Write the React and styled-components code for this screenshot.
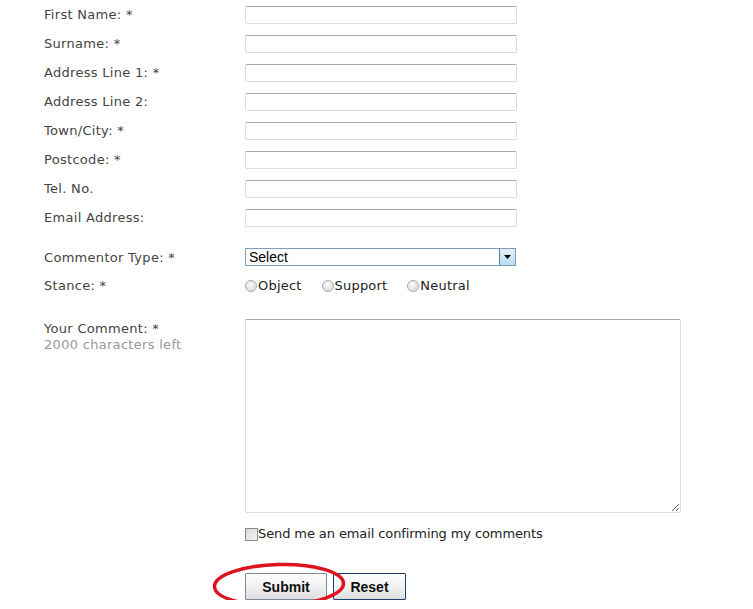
import React from "react";
import styled, { createGlobalStyle } from "styled-components";

const GlobalStyle = createGlobalStyle`
  body {
    margin: 0;
    background: #fff;
    font-family: "DejaVu Sans", Verdana, sans-serif;
  }
`;

const fields = [
  { label: "First Name: *" },
  { label: "Surname: *" },
  { label: "Address Line 1: *" },
  { label: "Address Line 2:" },
  { label: "Town/City: *" },
  { label: "Postcode: *" },
  { label: "Tel. No." },
  { label: "Email Address:" },
];

const stances = ["Object", "Support", "Neutral"];

const App = () => {
  return (
    <>
      <GlobalStyle />
      <Form>
        {fields.map((f) => (
          <Row key={f.label}>
            <Label>{f.label}</Label>
            <TextInput type="text" />
          </Row>
        ))}

        <Row $top={10}>
          <Label $pad={2}>Commentor Type: *</Label>
          <SelectBox>
            <SelectText>Select</SelectText>
            <ArrowButton>
              <svg width="7" height="4" viewBox="0 0 7 4">
                <path d="M0 0h7L3.5 4z" fill="#000" />
              </svg>
            </ArrowButton>
          </SelectBox>
        </Row>

        <Row>
          <Label $pad={1}>Stance: *</Label>
          <Radios>
            {stances.map((s) => (
              <RadioOption key={s}>
                <Radio type="radio" name="stance" />
                {s}
              </RadioOption>
            ))}
          </Radios>
        </Row>

        <CommentRow>
          <Label $pad={2}>
            Your Comment: *
            <Hint>2000 characters left</Hint>
          </Label>
          <Comment />
        </CommentRow>

        <CheckRow>
          <span />
          <CheckLabel>
            <Check type="checkbox" />
            Send me an email confirming my comments
          </CheckLabel>
        </CheckRow>

        <ButtonRow>
          <span />
          <Buttons>
            <Button $w={82}>Submit</Button>
            <Button $w={73} $focus>
              Reset
            </Button>
            <Circle width="138" height="48" viewBox="0 0 138 48">
              <ellipse
                cx="67"
                cy="23"
                rx="64.5"
                ry="20.5"
                fill="none"
                stroke="#dc1420"
                strokeWidth="3.5"
                transform="rotate(-1.5 67 23)"
              />
            </Circle>
          </Buttons>
        </ButtonRow>
      </Form>
    </>
  );
};

const Form = styled.form`
  padding-left: 44px;
  width: 700px;
`;

const Row = styled.div`
  display: grid;
  grid-template-columns: 201px 1fr;
  align-items: center;
  height: 29px;
  margin-top: ${(p) => p.$top || 0}px;
`;

const Label = styled.label`
  font-size: 13px;
  letter-spacing: 0.3px;
  color: #444;
  line-height: 16px;
  padding-top: ${(p) => p.$pad || 0}px;
`;

const Hint = styled.div`
  color: #999;
`;

const TextInput = styled.input`
  box-sizing: border-box;
  width: 272px;
  height: 18px;
  margin: 0;
  padding: 0 3px;
  border: 1px solid #dcdcdc;
  border-top-color: #a9a9a9;
  border-radius: 2px;
  background: #fff;
  outline: none;
`;

const SelectBox = styled.div`
  box-sizing: border-box;
  display: flex;
  width: 271px;
  height: 18px;
  border: 1px solid #7f9db9;
  background: #fff;
`;

const SelectText = styled.span`
  flex: 1;
  font-family: "Liberation Sans", Arial, sans-serif;
  font-size: 14px;
  line-height: 16px;
  color: #000;
  padding-left: 3px;
  border-right: 1px solid #5f7f9f;
`;

const ArrowButton = styled.span`
  width: 15px;
  display: flex;
  align-items: center;
  justify-content: center;
  background: linear-gradient(#e4f1fb, #b8dbf4);
  padding-top: 1px;
`;

const Radios = styled.div`
  display: flex;
  align-items: center;
`;

const RadioOption = styled.label`
  display: flex;
  align-items: center;
  font-size: 13px;
  letter-spacing: 0.2px;
  color: #222;
  margin-right: 20px;
`;

const Radio = styled.input`
  appearance: none;
  width: 12px;
  height: 12px;
  margin: 0 1px 0 0;
  border: 1px solid #a8a8a8;
  border-radius: 50%;
  background: radial-gradient(circle at 40% 35%, #fafafa, #d4d4d4);
  box-sizing: border-box;
`;

const CommentRow = styled.div`
  display: grid;
  grid-template-columns: 201px 1fr;
  align-items: start;
  margin-top: 19px;
`;

const Comment = styled.textarea`
  box-sizing: border-box;
  display: block;
  width: 436px;
  height: 194px;
  margin: 0;
  border: 1px solid #dcdcdc;
  border-top-color: #a9a9a9;
  border-radius: 2px;
  outline: none;
  resize: both;
`;

const CheckRow = styled.div`
  display: grid;
  grid-template-columns: 201px 1fr;
  margin-top: 13px;
  height: 16px;
`;

const CheckLabel = styled.label`
  display: flex;
  align-items: center;
  font-size: 13px;
  letter-spacing: -0.1px;
  line-height: 16px;
  color: #222;
`;

const Check = styled.input`
  appearance: none;
  width: 13px;
  height: 13px;
  margin: 0;
  border: 1px solid #8a8a8a;
  background: linear-gradient(135deg, #d8d8d8, #f6f6f6);
  box-sizing: border-box;
`;

const ButtonRow = styled.div`
  display: grid;
  grid-template-columns: 201px 1fr;
  margin-top: 31px;
`;

const Buttons = styled.div`
  position: relative;
  display: flex;
  gap: 6px;
`;

const Button = styled.button`
  box-sizing: border-box;
  width: ${(p) => p.$w}px;
  height: 27px;
  padding: 0;
  font-family: "Liberation Sans", Arial, sans-serif;
  font-size: 14px;
  font-weight: bold;
  color: #111;
  border: 1px solid ${(p) => (p.$focus ? "#1d3f6a" : "#7a8a9a")};
  border-radius: 1px;
  background: linear-gradient(#ffffff 0%, #f1f1f1 50%, #dedede 100%);
`;

const Circle = styled.svg`
  position: absolute;
  left: -33px;
  top: -11px;
  pointer-events: none;
`;

export default App;
